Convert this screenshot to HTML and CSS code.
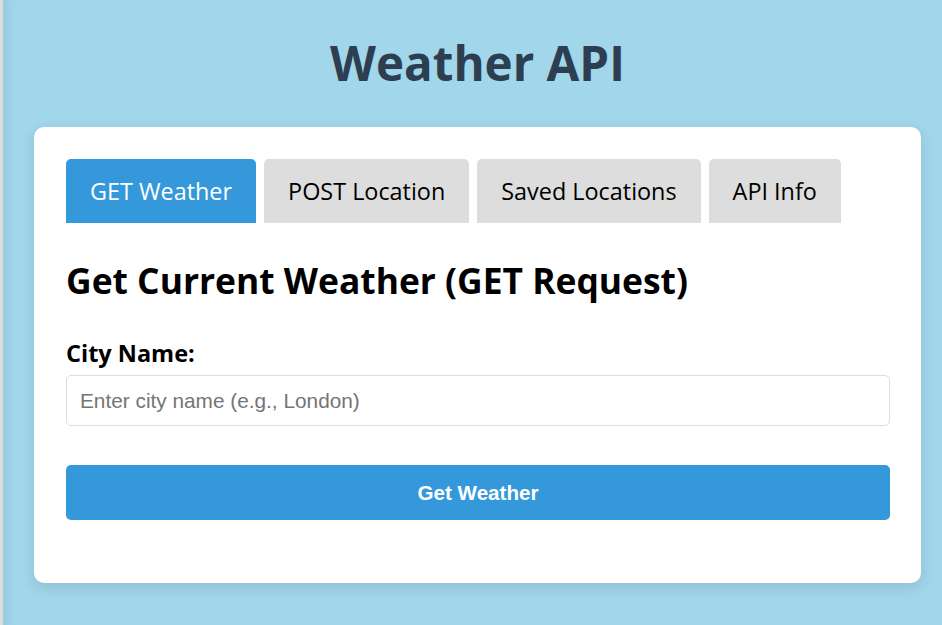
FILE: index.html
```html
<!DOCTYPE html>
<html lang="en">
<head>
<meta charset="utf-8">
<title>Weather API</title>
<link rel="stylesheet" href="styles.css">
</head>
<body>
<div class="page">
  <h1 class="title">Weather API</h1>
  <div class="card">
    <div class="tabs">
      <button class="tab active">GET Weather</button>
      <button class="tab">POST Location</button>
      <button class="tab">Saved Locations</button>
      <button class="tab">API Info</button>
    </div>
    <h2 class="section-title">Get Current Weather (GET Request)</h2>
    <div class="form-group">
      <label class="label" for="city">City Name:</label>
      <input class="input" id="city" type="text" placeholder="Enter city name (e.g., London)">
    </div>
    <button class="submit">Get Weather</button>
  </div>
</div>
</body>
</html>
```

FILE: styles.css
```css
* { box-sizing: border-box; }

html, body {
  margin: 0;
  padding: 0;
}

body {
  background: #a2d6eb;
  min-height: 100vh;
  border-left: 3px solid #dcdcdc;
  box-shadow: inset 14px 0 14px -12px rgba(0, 0, 0, 0.08);
  font-family: "Open Sans", "Noto Sans", sans-serif;
}

.page {
  padding: 25px 21px 40px 31px;
}

.title {
  margin: 0 0 26px;
  text-align: center;
  font-size: 47.5px;
  line-height: 76px;
  font-weight: 700;
  color: #2c3e50;
}

.card {
  background: #fff;
  border-radius: 10px;
  padding: 32px 31px 63px 32px;
  box-shadow: 0 4px 14px rgba(0, 0, 0, 0.12);
}

.tabs {
  display: flex;
  gap: 8px;
}

.tab {
  font-family: inherit;
  font-size: 23.4px;
  line-height: 32px;
  padding: 16px 24px;
  border: none;
  border-radius: 5px 5px 0 0;
  background: #dddddd;
  color: #000;
}

.tab.active {
  background: #3498db;
  color: #fff;
}

.section-title {
  margin: 33px 0 33px;
  font-size: 35.4px;
  line-height: 48px;
  font-weight: 700;
  color: #000;
}

.form-group {
  margin-bottom: 39px;
}

.label {
  display: block;
  font-size: 23.5px;
  line-height: 32px;
  font-weight: 700;
  margin-bottom: 6px;
  color: #000;
}

.input {
  display: block;
  width: 100%;
  height: 51px;
  padding: 0 13px;
  border: 1px solid #dddddd;
  border-radius: 5px;
  font-family: "Liberation Sans", Arial, sans-serif;
  font-size: 20.8px;
  color: #000;
}

.input::placeholder {
  color: #757575;
}

.submit {
  display: block;
  width: 100%;
  height: 55px;
  border: none;
  border-radius: 5px;
  background: #3498db;
  color: #fff;
  font-family: "Liberation Sans", Arial, sans-serif;
  font-size: 20.6px;
  font-weight: 700;
}
```
